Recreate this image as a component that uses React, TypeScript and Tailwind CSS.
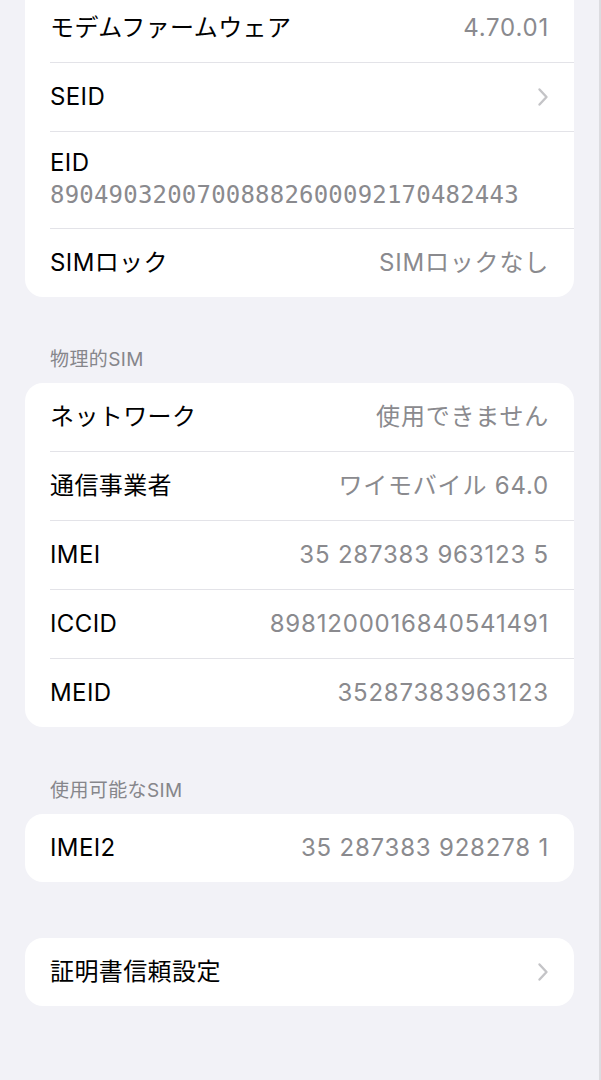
import React from "react";

type Row = {
  label: string;
  value?: string;
  chevron?: boolean;
  sub?: string;
};

const font = { fontFamily: 'Inter, "Noto Sans CJK JP", sans-serif' };

function Chevron() {
  return (
    <svg width="12" height="20" viewBox="0 0 12 20" className="shrink-0">
      <path d="M2.5 2.5 L9.5 10 L2.5 17.5" fill="none" stroke="#c4c4c7" strokeWidth="2.4" strokeLinecap="round" strokeLinejoin="round" />
    </svg>
  );
}

function Card({ rows, className = "" }: { rows: Row[]; className?: string }) {
  return (
    <div className={"mx-[25px] bg-white rounded-[18px] overflow-hidden " + className}>
      {rows.map((r, i) => (
        <div key={r.label} className="pl-[50px] -ml-[25px]">
          {r.sub ? (
            <div className="flex flex-col justify-center h-[96px] pr-[25px] pt-[1px]">
              <span className="text-[24px] leading-[28px] text-black tracking-[0.4px]">{r.label}</span>
              <span className="text-[24px] leading-[36px] text-[#8a8a8e] tracking-[0.2px]" style={{ fontFamily: '"DejaVu Sans Mono", monospace', fontWeight: 300 }}>
                {r.sub}
              </span>
            </div>
          ) : (
            <div className="flex items-center justify-between h-[68px] pr-[25px]">
              <span className="text-[24px] text-black tracking-[0.4px]">{r.label}</span>
              {r.chevron ? <Chevron /> : <span className="text-[24px] text-[#8a8a8e] tracking-[0.8px]">{r.value}</span>}
            </div>
          )}
          {i < rows.length - 1 && <div className="h-px bg-[#e3e3e8]" />}
        </div>
      ))}
    </div>
  );
}

function Header({ children, className = "" }: { children: React.ReactNode; className?: string }) {
  return <div className={"px-[50px] text-[19px] text-[#86868b] tracking-[0.4px] " + className}>{children}</div>;
}

export default function App() {
  return (
    <div className="w-[601px] h-[1080px] bg-[#f2f2f7] overflow-hidden border-r-2 border-[#dcdce0]" style={font}>
      <Card
        className="-mt-[6px] rounded-t-none"
        rows={[
          { label: "モデムファームウェア", value: "4.70.01" },
          { label: "SEID", chevron: true },
          { label: "EID", sub: "89049032007008882600092170482443" },
          { label: "SIMロック", value: "SIMロックなし" },
        ]}
      />
      <Header className="mt-[49px] h-[37px] leading-[28px]">物理的SIM</Header>
      <Card
        rows={[
          { label: "ネットワーク", value: "使用できません" },
          { label: "通信事業者", value: "ワイモバイル 64.0" },
          { label: "IMEI", value: "35 287383 963123 5" },
          { label: "ICCID", value: "8981200016840541491" },
          { label: "MEID", value: "35287383963123" },
        ]}
      />
      <Header className="mt-[50px] h-[37px] leading-[28px]">使用可能なSIM</Header>
      <Card rows={[{ label: "IMEI2", value: "35 287383 928278 1" }]} />
      <Card className="mt-[56px]" rows={[{ label: "証明書信頼設定", chevron: true }]} />
    </div>
  );
}
